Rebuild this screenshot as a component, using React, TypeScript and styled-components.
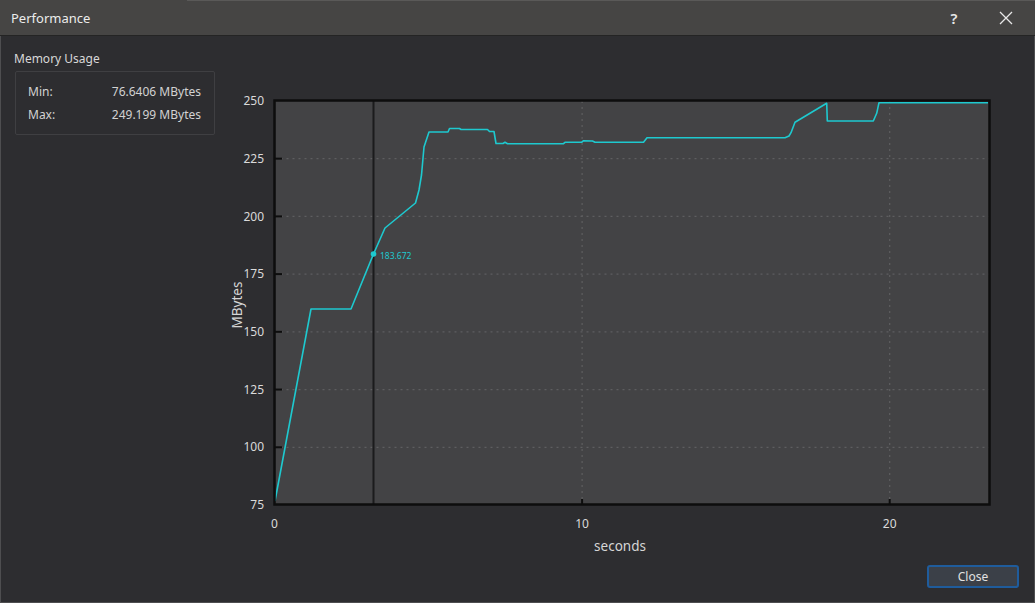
import React from 'react'
import styled, { createGlobalStyle } from 'styled-components'

const GlobalStyle = createGlobalStyle`
  html, body {
    margin: 0;
    padding: 0;
    background: #2d2d30;
    font-family: "Noto Sans", "Open Sans", sans-serif;
  }
`

const Window = styled.div`
  width: 1035px;
  height: 603px;
  display: flex;
  flex-direction: column;
  background: #2d2d30;
  color: #d6d6d6;
  overflow: hidden;
`

const TitleBar = styled.div`
  height: 36px;
  flex-shrink: 0;
  box-sizing: border-box;
  display: flex;
  align-items: center;
  gap: 6px;
  padding: 0 6px 0 11px;
  background: linear-gradient(#5a5958, #5a5958) no-repeat 187px 0 / 100% 1px, #464544;
  border-bottom: 1px solid #242424;
  color: #ececec;
  font-size: 13px;
`

const TitleText = styled.div`
  flex: 1;
`

const TitleButton = styled.div`
  width: 46px;
  height: 35px;
  display: flex;
  align-items: center;
  justify-content: center;
  color: #e8e8e8;
  font-size: 15px;
  font-weight: 600;
`

const Body = styled.div`
  flex: 1;
  display: grid;
  grid-template-columns: 214px 1fr;
  grid-template-rows: 1fr auto;
  border: 1px solid #4e4e50;
  border-top: none;
  min-height: 0;
`

const LeftPanel = styled.div`
  padding: 15px 0 0 13px;
  font-size: 12px;
`

const GroupTitle = styled.div`
  line-height: 16px;
  color: #d8d8d8;
`

const GroupBox = styled.div`
  margin: 4px 0 0 1px;
  width: 200px;
  height: 64px;
  box-sizing: border-box;
  border: 1px solid #3f3f42;
  border-radius: 2px;
  padding: 12px 13px 0 12px;
  display: flex;
  flex-direction: column;
  gap: 7px;
`

const StatRow = styled.div`
  display: flex;
  justify-content: space-between;
  line-height: 16px;
  color: #d2d2d2;
`

const ChartCell = styled.div`
  min-height: 0;
`

const Footer = styled.div`
  grid-column: 1 / 3;
  display: flex;
  justify-content: flex-end;
  padding: 0 15px 14px 0;
`

const CloseButton = styled.button`
  width: 92px;
  height: 23px;
  box-sizing: border-box;
  border: 2px solid #1f5c9c;
  border-radius: 3px;
  background: #3b4048;
  color: #e2e2e2;
  font-family: "Noto Sans", "Open Sans", sans-serif;
  font-size: 12px;
  padding: 0;
`

// page-space coordinates of the plot
const PX0 = 274.5
const PX_PER_SEC = 30.76
const PY75 = 505
const PY_PER_MB = 2.309

const yOf = (v: number) => PY75 - (v - 75) * PY_PER_MB
const xOf = (s: number) => PX0 + s * PX_PER_SEC

const series: [number, number][] = [
  [275, 501], [311, 309], [351, 309], [373.5, 254], [385, 228], [415.5, 203],
  [419, 190], [421.5, 175], [424, 147], [429, 132], [448, 132], [449.5, 128.5],
  [459.5, 128.5], [461, 129.5], [487.5, 129.5], [489.5, 131.5], [494, 131.5],
  [496, 143.5], [503, 143.5], [505, 142.3], [507.5, 143.7], [563.5, 143.7],
  [565, 142.3], [581.5, 142.3], [583.3, 140.8], [592.5, 141], [595, 142.3],
  [643.5, 142.3], [647, 137.7], [785, 137.7], [789, 136], [791, 132.7],
  [795, 122.3], [826.7, 103.3], [827.3, 121], [873.3, 121], [876.7, 113.3],
  [879, 102.7], [988, 102.7],
]

const yTicks = [250, 225, 200, 175, 150, 125, 100, 75]
const xTicks = [0, 10, 20]

const MemoryChart = () => (
  <svg width="819" height="529" style={{ display: 'block' }}>
    <g transform="translate(-215,-36)" fontFamily='"Noto Sans", "Open Sans", sans-serif'>
      <rect x={PX0} y={100.5} width={715} height={404} fill="#434345" />

      {yTicks.slice(1, -1).map(v => (
        <line key={`gy${v}`} x1={PX0} x2={989} y1={yOf(v)} y2={yOf(v)}
          stroke="#5e5e60" strokeWidth={1.2} strokeDasharray="2 4" />
      ))}
      {xTicks.slice(1).map(s => (
        <line key={`gx${s}`} x1={xOf(s)} x2={xOf(s)} y1={101} y2={504}
          stroke="#5e5e60" strokeWidth={1.2} strokeDasharray="2 4" />
      ))}

      <line x1={373.5} x2={373.5} y1={101} y2={504} stroke="#1b1b1c" strokeWidth={2} />

      <polyline points={series.map(p => p.join(',')).join(' ')}
        fill="none" stroke="#1ec9cf" strokeWidth={1.6} strokeLinejoin="round" />
      <circle cx={373.5} cy={254} r={2.8} fill="#1ec9cf" />
      <text x={380} y={257} fontSize={8.5} fill="#1ec9cf" dominantBaseline="middle">183.672</text>

      <rect x={PX0} y={100.5} width={715} height={404} fill="none" stroke="#0d0d0d" strokeWidth={2.5} />

      {yTicks.map(v => (
        <g key={`ty${v}`}>
          {v !== 75 && v !== 250 && (
            <line x1={PX0} x2={282} y1={yOf(v)} y2={yOf(v)} stroke="#0d0d0d" strokeWidth={2} />
          )}
          <text x={264} y={yOf(v) + 1} fontSize={12} fill="#dadada" textAnchor="end"
            dominantBaseline="middle">{v}</text>
        </g>
      ))}
      {xTicks.map(s => (
        <g key={`tx${s}`}>
          {s !== 0 && (
            <line x1={xOf(s)} x2={xOf(s)} y1={505} y2={499} stroke="#0d0d0d" strokeWidth={2} />
          )}
          <text x={xOf(s)} y={525} fontSize={12} fill="#dadada" textAnchor="middle"
            dominantBaseline="middle">{s}</text>
        </g>
      ))}

      <text x={620} y={547} fontSize={13.5} fill="#d6d6d6" textAnchor="middle"
        dominantBaseline="middle">seconds</text>
      <text x={0} y={0} fontSize={13.5} fill="#d6d6d6" textAnchor="middle" dominantBaseline="middle"
        transform="translate(238,305) rotate(-90)">MBytes</text>
    </g>
  </svg>
)

const CloseIcon = () => (
  <svg width="14" height="14" viewBox="0 0 14 14">
    <path d="M1 1 L13 13 M13 1 L1 13" stroke="#e8e8e8" strokeWidth={1.3} fill="none" />
  </svg>
)

const App = () => (
  <Window>
    <GlobalStyle />
    <TitleBar>
      <TitleText>Performance</TitleText>
      <TitleButton>?</TitleButton>
      <TitleButton><CloseIcon /></TitleButton>
    </TitleBar>
    <Body>
      <LeftPanel>
        <GroupTitle>Memory Usage</GroupTitle>
        <GroupBox>
          <StatRow><span>Min:</span><span>76.6406 MBytes</span></StatRow>
          <StatRow><span>Max:</span><span>249.199 MBytes</span></StatRow>
        </GroupBox>
      </LeftPanel>
      <ChartCell>
        <MemoryChart />
      </ChartCell>
      <Footer>
        <CloseButton>Close</CloseButton>
      </Footer>
    </Body>
  </Window>
)

export default App
